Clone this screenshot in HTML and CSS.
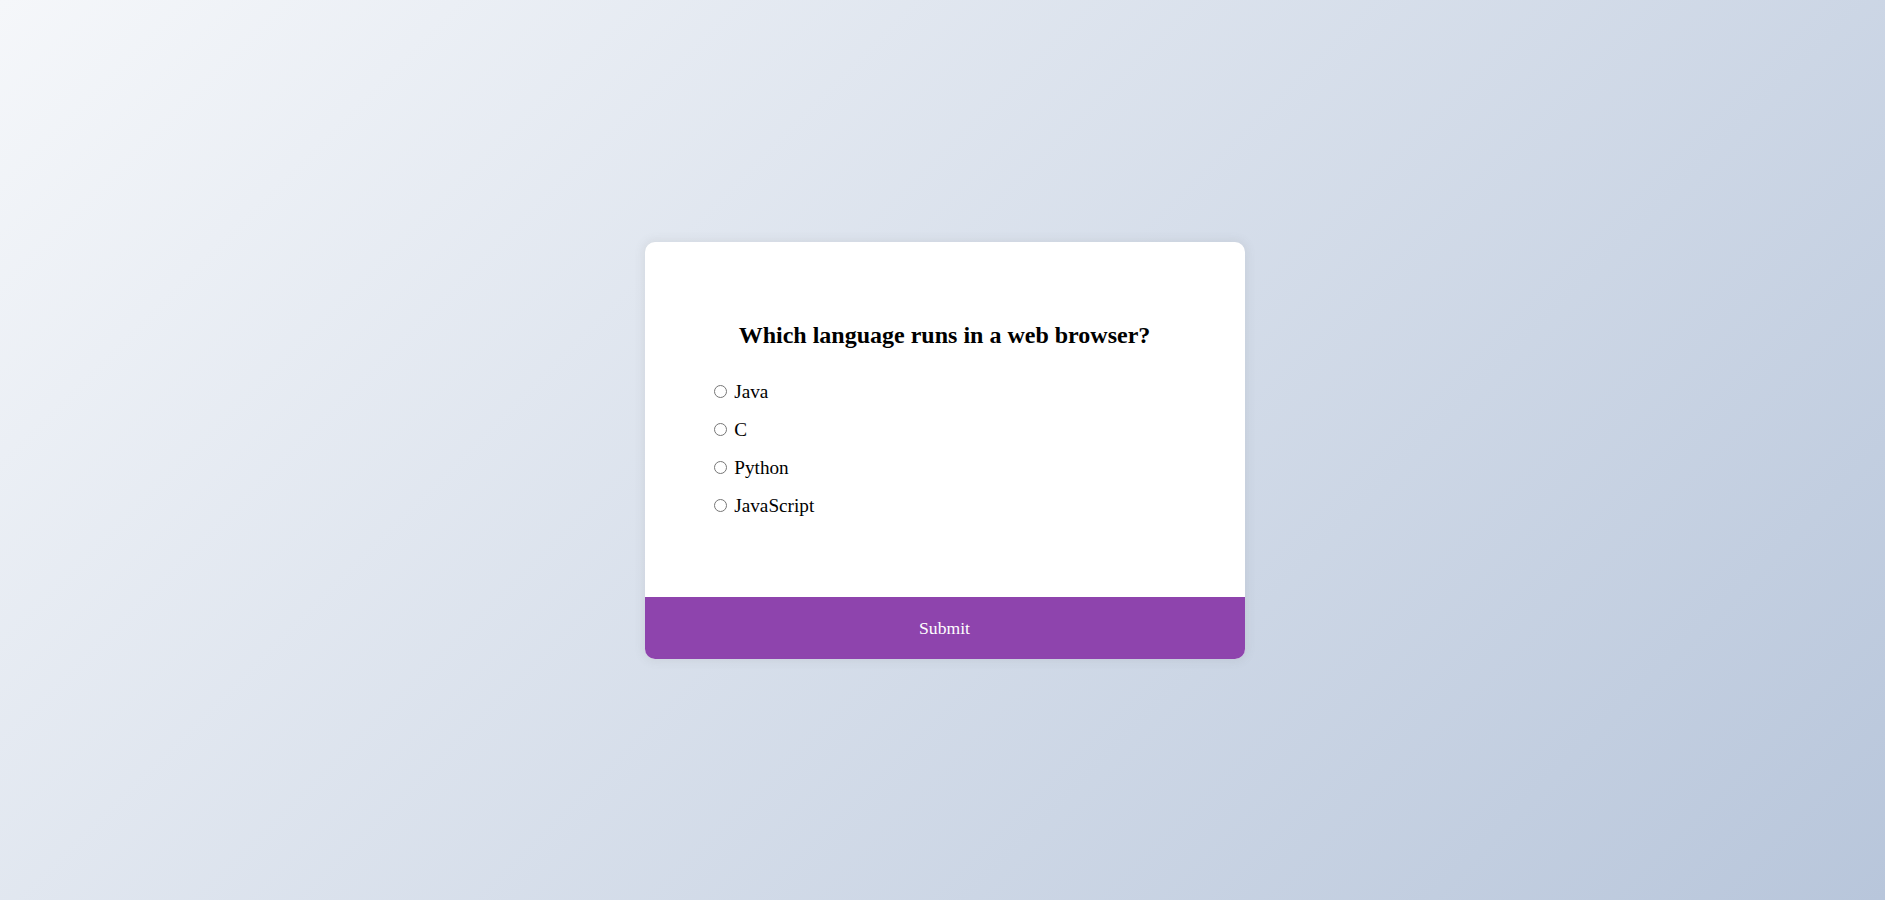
FILE: index.html
```html
<!DOCTYPE html>
<html lang="en">
<head>
<meta charset="UTF-8">
<title>Quiz</title>
<link rel="stylesheet" href="styles.css">
</head>
<body>
<div class="quiz-container">
  <div class="quiz-header">
    <h2 class="question">Which language runs in a web browser?</h2>
    <ul class="answers">
      <li><input type="radio" name="answer" id="a" class="answer"> <label for="a">Java</label></li>
      <li><input type="radio" name="answer" id="b" class="answer"> <label for="b">C</label></li>
      <li><input type="radio" name="answer" id="c" class="answer"> <label for="c">Python</label></li>
      <li><input type="radio" name="answer" id="d" class="answer"> <label for="d">JavaScript</label></li>
    </ul>
  </div>
  <button class="submit">Submit</button>
</div>
</body>
</html>
```

FILE: styles.css
```css
* {
  box-sizing: border-box;
}

html, body {
  height: 100%;
}

body {
  margin: 0;
  padding: 1px 0 0 4px;
  font-family: "Liberation Serif", "Times New Roman", serif;
  background-color: #b8c6db;
  background-image: linear-gradient(315deg, #b8c6db 0%, #f5f7fa 100%);
  display: flex;
  align-items: center;
  justify-content: center;
  overflow: hidden;
}

.quiz-container {
  background-color: #fff;
  border-radius: 10px;
  box-shadow: 0 0 10px 2px rgba(100, 100, 100, 0.1);
  width: 600px;
  overflow: hidden;
}

.quiz-header {
  padding: 4rem;
}

.question {
  padding: 1rem;
  text-align: center;
  margin: 0;
  font-size: 24px;
}

.answers {
  list-style-type: none;
  padding: 0;
  margin: 16px 0;
}

.answers li {
  font-size: 1.2rem;
  margin: 1rem 0;
}

.answers label {
  cursor: pointer;
}

.submit {
  background-color: #8e44ad;
  color: #fff;
  border: none;
  display: block;
  width: 100%;
  cursor: pointer;
  font-size: 1.1rem;
  font-family: inherit;
  padding: 1.3rem;
}
```
